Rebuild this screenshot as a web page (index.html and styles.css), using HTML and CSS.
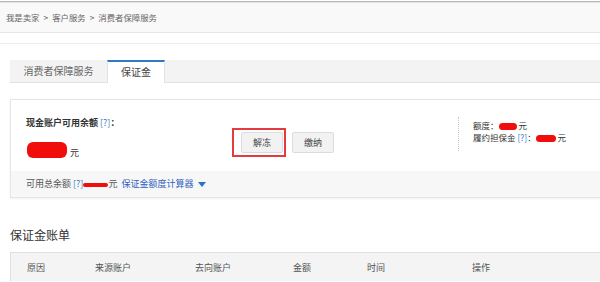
FILE: index.html
```html
<!DOCTYPE html>
<html lang="zh-CN">
<head>
<meta charset="utf-8">
<link rel="stylesheet" href="styles.css">
</head>
<body>
<div class="crumbs">我是卖家<span class="gt">&gt;</span>客户服务<span class="gt">&gt;</span>消费者保障服务</div>
<div class="sep"></div>
<div class="tabs">
  <div class="tab">消费者保障服务</div>
  <div class="tab active">保证金</div>
</div>
<div class="card">
  <div class="card-top">
    <div class="balance">
      <div class="label">现金账户可用余额 <span class="q">[?]</span>：</div>
      <div class="amount"><span class="blob big"></span><span class="yuan">元</span></div>
    </div>
    <div class="mark"><button class="btn">解冻</button></div>
    <button class="btn pay">缴纳</button>
    <div class="side">
      <div class="line">额度：<span class="blob small"></span> 元</div>
      <div class="line">履约担保金 <span class="q">[?]</span>：<span class="blob small2"></span> 元</div>
    </div>
  </div>
  <div class="card-foot">
    可用总余额 <span class="q">[?]</span><span class="scribble"></span>元 <span class="link">保证金额度计算器</span><span class="tri"></span>
  </div>
</div>
<h2 class="title">保证金账单</h2>
<div class="thead">
  <div>原因</div>
  <div>来源账户</div>
  <div>去向账户</div>
  <div>金额</div>
  <div>时间</div>
  <div>操作</div>
</div>
</body>
</html>
```

FILE: styles.css
```css
html, body {
  margin: 0;
  padding: 0;
  background: #fff;
  overflow: hidden;
}
body {
  font-family: "Noto Sans CJK SC", "Noto Sans", sans-serif;
  font-size: 9px;
  color: #333;
  width: 600px;
}
.crumbs {
  height: 30px;
  line-height: 30px;
  border-top: 1px solid #b8b8b8;
  box-shadow: inset 0 1px 0 #e2e2e2;
  border-bottom: 1px solid #e6e6e6;
  background: #f9f9f9;
  padding-left: 6px;
  color: #666;
  margin-top: 1px;
  font-size: 8.4px;
}
.gt {
  margin: 0 4px;
}
.sep {
  margin-top: 10px;
  height: 1px;
  background: #ececec;
}
.tabs {
  margin: 16px 0 0 10px;
  height: 22px;
  background: #f3f3f3;
  border-bottom: 1px solid #e2e2e2;
  display: flex;
}
.tab {
  width: 97px;
  text-align: center;
  line-height: 22px;
  font-size: 10px;
  color: #666;
}
.tab.active {
  width: 56px;
  background: #fff;
  color: #444;
  border-top: 2px solid #2d7bc4;
  border-left: 1px solid #e2e2e2;
  border-right: 1px solid #e2e2e2;
  line-height: 20px;
  height: 21px;
  margin-bottom: -1px;
}
.card {
  margin: 16px 0 0 10px;
  border: 1px solid #e6e6e6;
  border-right: none;
  box-shadow: 0 1px 2px rgba(0,0,0,0.06);
}
.card-top {
  height: 71px;
  display: flex;
  align-items: flex-start;
  padding: 17px 0 0 15px;
  box-sizing: border-box;
}
.balance {
  width: 206px;
}
.label {
  font-weight: bold;
  line-height: 11px;
}
.q {
  color: #3a7cc4;
  font-weight: normal;
}
.amount {
  margin-top: 14px;
  display: flex;
  align-items: flex-end;
}
.blob {
  display: inline-block;
  background: #f20d0d;
  border-radius: 6px;
}
.blob.big {
  width: 40px;
  height: 16px;
  margin-left: 1px;
}
.yuan {
  margin-left: 3px;
  line-height: 10px;
}
.mark {
  margin-top: 11px;
  border: 2px solid #e43b3e;
  padding: 2px 1px 2px 7px;
}
.btn {
  display: block;
  width: 42px;
  height: 21px;
  padding: 0;
  border: 1px solid #dcdcdc;
  border-radius: 2px;
  background: #f2f2f2;
  font-family: inherit;
  font-size: 9px;
  color: #444;
}
.btn.pay {
  margin: 15px 0 0 6px;
}
.side {
  margin-left: auto;
  width: 127px;
  height: 32px;
  border-left: 1px dotted #c8c8c8;
  padding: 2px 0 0 14px;
  box-sizing: content-box;
}
.line {
  height: 11px;
  line-height: 13px;
  font-size: 8.5px;
}
.line + .line {
  margin-top: 1px;
}
.blob.small {
  width: 18px;
  height: 7px;
  vertical-align: -1px;
}
.blob.small2 {
  width: 20px;
  height: 7px;
  vertical-align: -1px;
}
.card-foot {
  height: 26px;
  line-height: 26px;
  background: #f7f7f7;
  padding-left: 15px;
  color: #555;
}
.scribble {
  display: inline-block;
  width: 25px;
  height: 4px;
  background: #f20d0d;
  border-radius: 3px;
  vertical-align: middle;
}
.link {
  color: #2f62c0;
  margin-left: 2px;
}
.tri {
  display: inline-block;
  width: 0;
  height: 0;
  border-left: 4px solid transparent;
  border-right: 4px solid transparent;
  border-top: 5px solid #2f6fc4;
  margin-left: 5px;
  vertical-align: middle;
}
.title {
  margin: 29px 0 0 10px;
  font-size: 12px;
  font-weight: normal;
  color: #333;
  line-height: 16px;
}
.thead {
  margin: 9px 0 0 10px;
  height: 28px;
  background: #f4f4f4;
  border-top: 1px solid #e0e0e0;
  border-left: 1px solid #e0e0e0;
  display: grid;
  grid-template-columns: 68px 100px 98px 74px 105px 1fr;
  padding-left: 16px;
  align-items: center;
  color: #555;
}
```
